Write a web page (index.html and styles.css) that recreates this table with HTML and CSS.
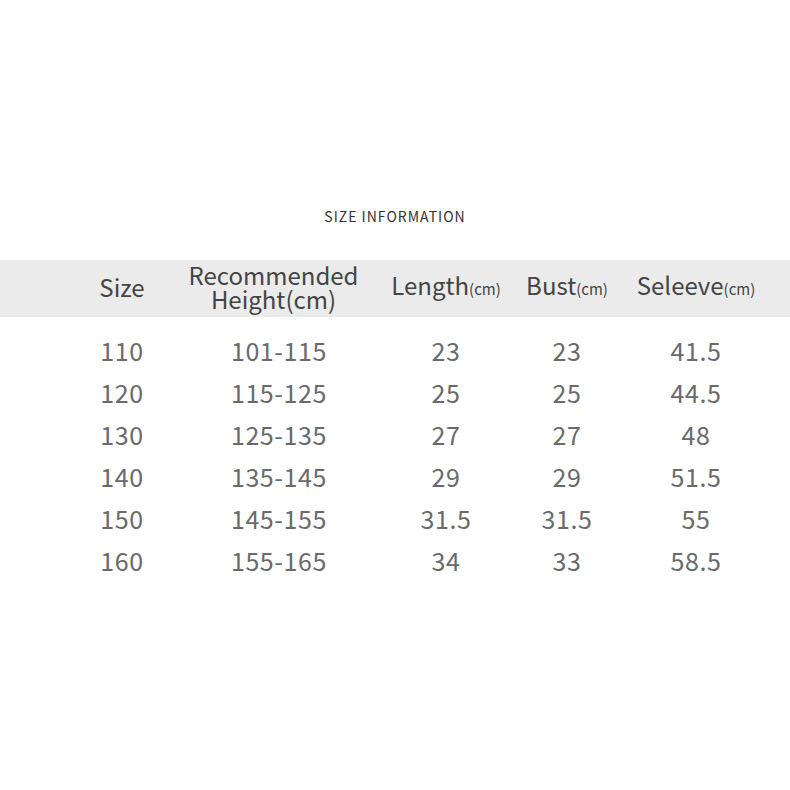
FILE: index.html
```html
<!DOCTYPE html>
<html>
<head>
<meta charset="utf-8">
<link rel="stylesheet" href="styles.css">
</head>
<body>
<div class="page">
  <div class="title">SIZE INFORMATION</div>
  <div class="head row">
    <div class="cell">Size</div>
    <div class="cell two">Recommended<br>Height(cm)</div>
    <div class="cell">Length<small>(cm)</small></div>
    <div class="cell">Bust<small>(cm)</small></div>
    <div class="cell">Seleeve<small>(cm)</small></div>
  </div>
  <div class="body">
    <div class="row data"><div class="cell">110</div><div class="cell rec">101-115</div><div class="cell">23</div><div class="cell">23</div><div class="cell">41.5</div></div>
    <div class="row data"><div class="cell">120</div><div class="cell rec">115-125</div><div class="cell">25</div><div class="cell">25</div><div class="cell">44.5</div></div>
    <div class="row data"><div class="cell">130</div><div class="cell rec">125-135</div><div class="cell">27</div><div class="cell">27</div><div class="cell">48</div></div>
    <div class="row data"><div class="cell">140</div><div class="cell rec">135-145</div><div class="cell">29</div><div class="cell">29</div><div class="cell">51.5</div></div>
    <div class="row data"><div class="cell">150</div><div class="cell rec">145-155</div><div class="cell">31.5</div><div class="cell">31.5</div><div class="cell">55</div></div>
    <div class="row data"><div class="cell">160</div><div class="cell rec">155-165</div><div class="cell">34</div><div class="cell">33</div><div class="cell">58.5</div></div>
  </div>
</div>
</body>
</html>
```
FILE: styles.css
```css
html, body {
  margin: 0;
  padding: 0;
  background: #ffffff;
}
body {
  font-family: "Noto Sans CJK SC", "Noto Sans", sans-serif;
  width: 790px;
  height: 790px;
  overflow: hidden;
}
.page {
  padding-top: 205px;
}
.title {
  text-align: center;
  font-size: 14px;
  letter-spacing: 1px;
  line-height: 22px;
  color: #333333;
  height: 22px;
}
.row {
  display: grid;
  grid-template-columns: 120px 188px 152px 90px 168px;
  padding-left: 62px;
  align-items: center;
}
.cell {
  text-align: center;
  white-space: nowrap;
}
.head {
  margin-top: 33px;
  height: 57px;
  box-sizing: border-box;
  padding-bottom: 4px;
  background: #ebebeb;
  color: #444444;
  font-size: 24px;
  line-height: 24px;
}
.head .two {
  padding-right: 5px;
}
.head small {
  font-size: 15px;
}
.body {
  padding-top: 12px;
}
.data {
  height: 42px;
  font-size: 25px;
  letter-spacing: 0.6px;
  line-height: 42px;
  color: #6a6a6a;
}
.rec {
  padding-left: 6px;
}
```
